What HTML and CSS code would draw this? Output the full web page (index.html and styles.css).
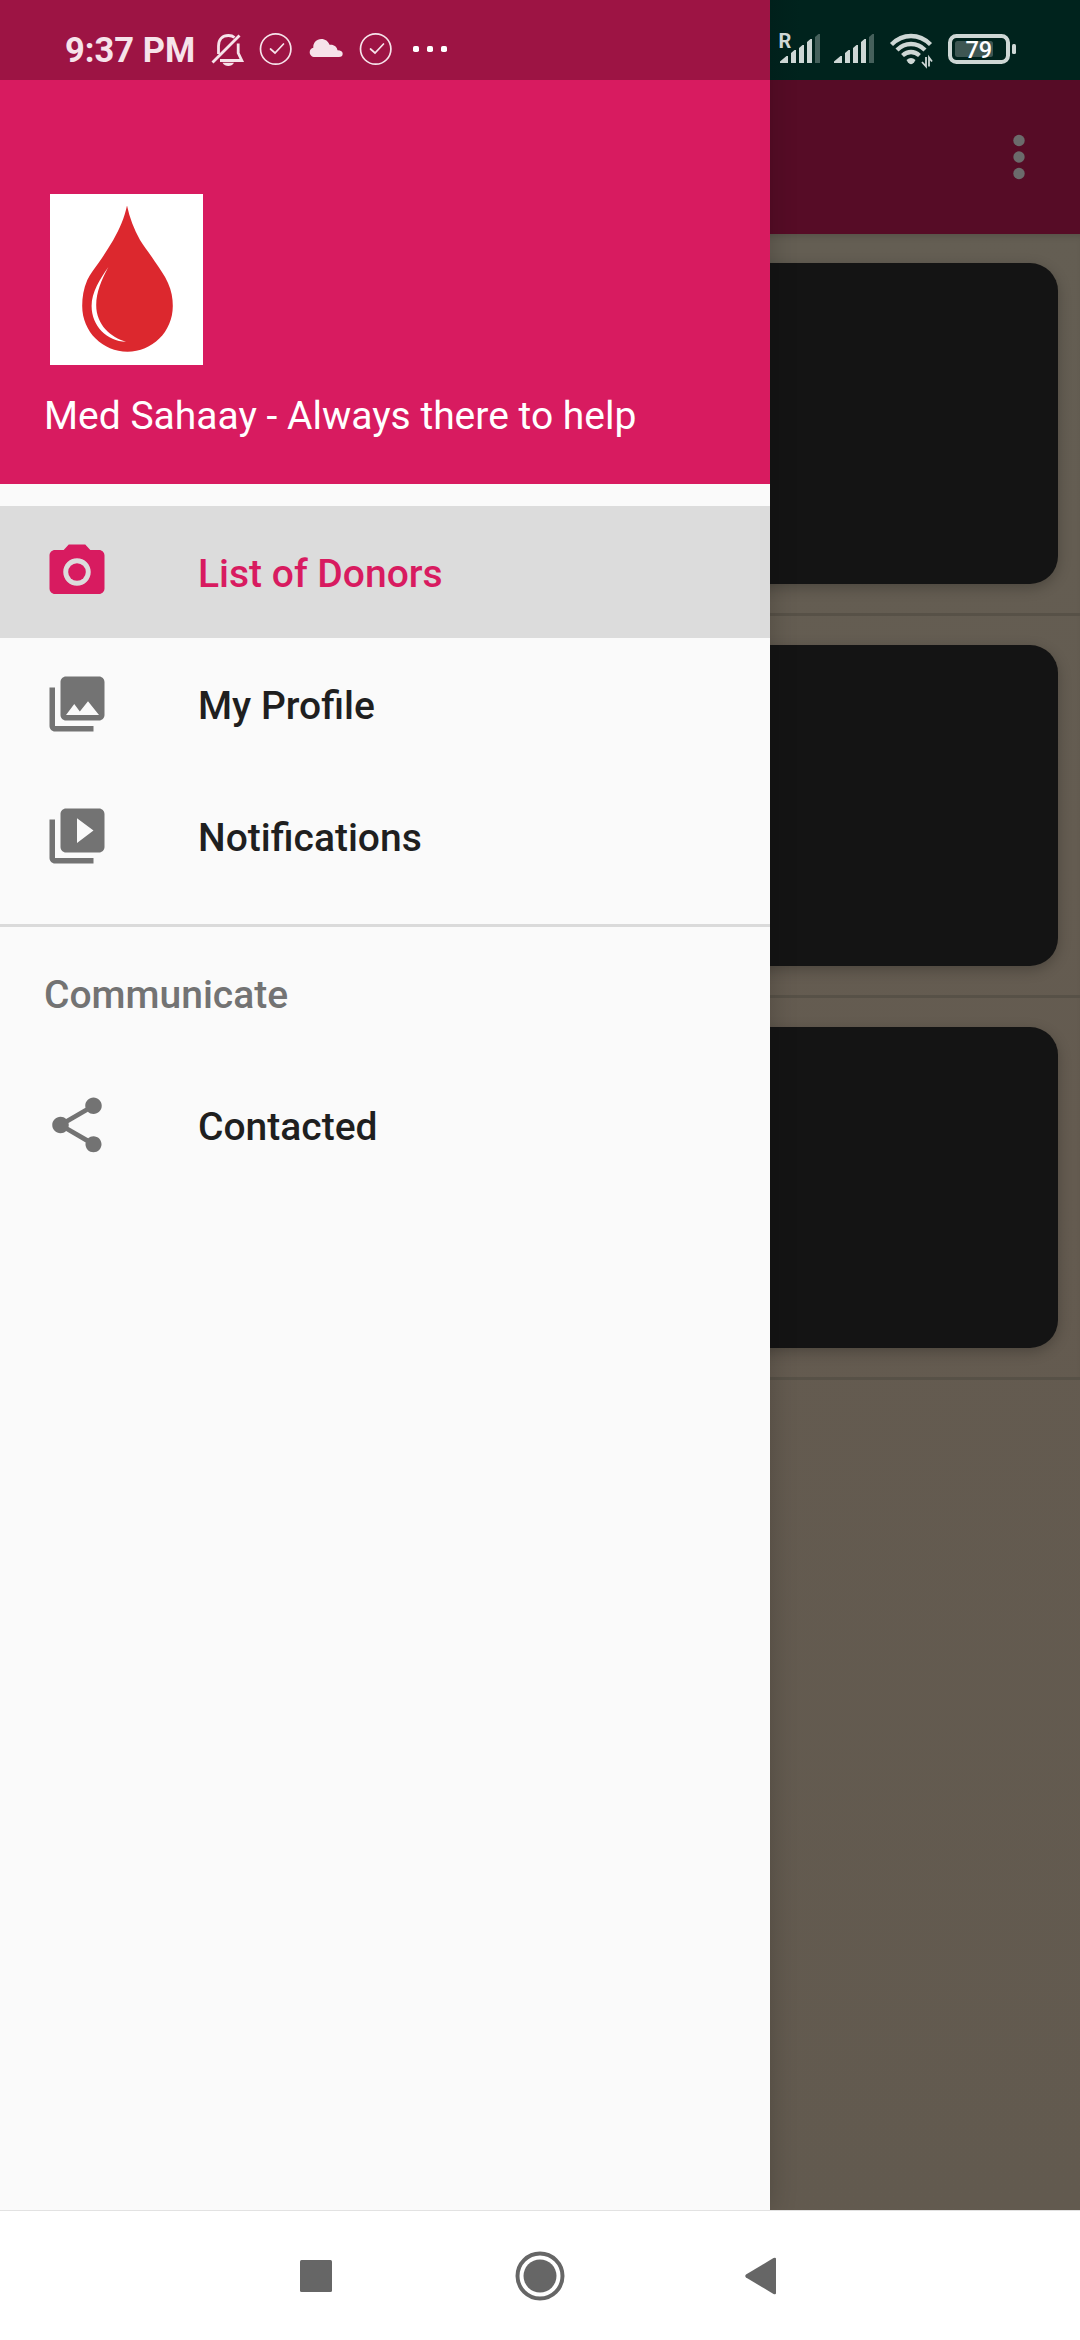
FILE: index.html
```html
<!DOCTYPE html>
<html lang="en">
<head>
<meta charset="utf-8">
<title>Med Sahaay</title>
<link rel="stylesheet" href="styles.css">
</head>
<body>
<div class="screen">
  <div class="stage">
    <main class="app">
      <div class="appbar">
        <svg class="overflow" width="12" height="46" viewBox="0 0 12 46"><circle cx="6" cy="6.500" r="5.700"/><circle cx="6" cy="23" r="5.700"/><circle cx="6" cy="39.500" r="5.700"/></svg>
      </div>
      <div class="list">
        <div class="row"><div class="card"></div></div>
        <div class="row"><div class="card"></div></div>
        <div class="row"><div class="card"></div></div>
      </div>
    </main>

    <aside class="drawer">
      <header class="drawer-header">
        <svg class="logo" width="153" height="171" viewBox="0 0 153 171">
          <path fill="#dc282e" d="M77 11.500C79.500 24 84 35 90 46C95 54 100 60 105 67.700C110 75 114.500 81 118 89C121.500 97 122.800 104 122.800 112C122.800 138 102 157.700 77.500 157.700C53 157.700 32.200 138 32.200 112C32.200 103 33.500 95 37.300 86C40.500 80 44 75 48.300 69.300C53.500 62 58.500 54 63.300 46C69.500 35 74.500 24 77 11.500Z"/>
          <path fill="#fff" d="M58.400 73C50 85 41.600 98 41.600 112C41.600 132 57 147.500 76 147.700C61 143.500 46.200 131 46.200 111C46.200 98 51.500 86 58.400 73Z"/>
        </svg>
        <p class="tagline">Med Sahaay - Always there to help</p>
      </header>
      <nav class="menu">
        <a class="item active"><svg class="icon" viewBox="0 0 24 24"><circle cx="12" cy="12" r="3.200"/><path d="M9 2L7.170 4H4c-1.100 0-2 .9-2 2v12c0 1.100.9 2 2 2h16c1.100 0 2-.9 2-2V6c0-1.100-.9-2-2-2h-3.170L15 2H9zm3 15c-2.760 0-5-2.240-5-5s2.240-5 5-5 5 2.240 5 5-2.240 5-5 5z"/></svg><span>List of Donors</span></a>
        <a class="item"><svg class="icon" viewBox="0 0 24 24"><path d="M22 16V4c0-1.100-.9-2-2-2H8c-1.100 0-2 .9-2 2v12c0 1.100.9 2 2 2h12c1.100 0 2-.9 2-2zm-11-4l2.030 2.710L16 11l4 5H8l3-4zM2 6v14c0 1.100.9 2 2 2h14v-2H4V6H2z"/></svg><span>My Profile</span></a>
        <a class="item"><svg class="icon" viewBox="0 0 24 24"><path d="M4 6H2v14c0 1.100.9 2 2 2h14v-2H4V6zm16-4H8c-1.100 0-2 .9-2 2v12c0 1.100.9 2 2 2h12c1.100 0 2-.9 2-2V4c0-1.100-.9-2-2-2zm-8 12.500v-9l6 4.500-6 4.500z"/></svg><span>Notifications</span></a>
        <hr class="divider">
        <h2 class="subheader">Communicate</h2>
        <a class="item"><svg class="icon" viewBox="0 0 24 24"><path d="M18 16.080c-.76 0-1.440.3-1.960.77L8.910 12.700c.05-.23.090-.46.090-.7s-.04-.47-.09-.7l7.050-4.110c.54.5 1.250.81 2.040.81 1.660 0 3-1.340 3-3s-1.340-3-3-3-3 1.340-3 3c0 .24.040.47.090.7L8.040 9.810C7.500 9.310 6.790 9 6 9c-1.660 0-3 1.340-3 3s1.340 3 3 3c.79 0 1.500-.31 2.040-.81l7.120 4.160c-.05.21-.08.43-.08.650 0 1.610 1.310 2.920 2.920 2.920s2.920-1.310 2.920-2.920-1.310-2.920-2.920-2.920z"/></svg><span>Contacted</span></a>
      </nav>
    </aside>

    <div class="statusbar">
      <div class="status-left">
        <span class="clock">9:37 PM</span>
        <svg width="250" height="40" viewBox="205 29 250 40">
          <g fill="none" stroke="#f6e3ea" stroke-width="2.800">
            <path d="M218.500 54V46C218.500 39 222.500 35.500 228.500 35.500C231 35.500 233 36.200 234.500 37.500M238.200 43.500V53L241.800 60.500H220"/>
            <path d="M212.500 62.500L239.500 35.500"/>
          </g>
          <path fill="#f6e3ea" d="M222.500 62.800H234Q232 66 228.300 66T222.500 62.800Z"/>
          <g fill="none" stroke="#f6e3ea" stroke-width="1.700" stroke-linecap="round">
            <circle cx="275.700" cy="49" r="15.200"/><path d="M270.500 49L275 53L283.500 44"/>
            <circle cx="375.700" cy="49" r="15.200"/><path d="M370.500 49L375 53L383.500 44"/>
          </g>
          <path fill="#f6e3ea" d="M315 57C311.500 57 309.700 54.700 309.700 52.200C309.700 49.800 311.300 48.200 313.300 47.700C313 42.500 316.500 39 321.300 39C325.300 39 328.300 41.300 329.500 44.800C334 44.300 337 46.800 337.500 50.300C341 50.300 342.700 51.800 342.700 53.700C342.700 55.800 341.300 57 339 57Z"/>
          <g fill="#fff"><rect x="413" y="46" width="6" height="6" rx="1.800"/><rect x="427" y="46" width="6" height="6" rx="1.800"/><rect x="441" y="46" width="6" height="6" rx="1.800"/></g>
        </svg>
      </div>
      <svg class="status-right" width="245" height="40" viewBox="775 29 245 40">
        <text class="roaming" x="778.500" y="47.500">R</text>
        <g id="signal" fill="#ced7d5">
          <path d="M780 63V61.500L786.500 56H788V63ZM791 63V53L794.500 50H796V63ZM799 63V48L802.500 45H804V63ZM807 63V42L810.500 39H812V63Z"/>
          <path fill="#45605b" d="M815 63V37L818.500 34H820V63Z"/>
        </g>
        <use href="#signal" x="54"/>
        <g fill="none" stroke="#ced7d5" stroke-width="4.300">
          <path d="M891.500 44.500Q900 36 911 36T930.500 44.500"/>
          <path d="M897 50Q903 44 911 44T925 50"/>
          <path d="M902.500 55.500Q906.500 52 911 52T919.500 55.500"/>
        </g>
        <path fill="#ced7d5" d="M906.500 60Q911 56 915.500 60L914 62.500Q911 66 908 62.500Z"/>
        <path fill="none" stroke="#ced7d5" stroke-width="1.800" d="M926 57V66.500L922 62M929 66.500V57.500L932 61.500"/>
        <rect x="950" y="36" width="58" height="26" rx="6.500" fill="none" stroke="#ced7d5" stroke-width="4"/>
        <rect x="955" y="41" width="38" height="16" rx="2.500" fill="#3e5652"/>
        <rect x="1012" y="44" width="4" height="10" rx="1.500" fill="#ced7d5"/>
        <text class="level" x="965.500" y="58">79</text>
      </svg>
    </div>
  </div>

  <footer class="navbar">
    <svg width="32" height="34" viewBox="0 0 32 34"><rect y="1" width="32" height="32" rx="1.500"/></svg>
    <svg class="home" width="50" height="50" viewBox="0 0 50 50"><circle cx="25" cy="25" r="22.500" fill="none" stroke="#666" stroke-width="4"/><circle cx="25" cy="25" r="16.500"/></svg>
    <svg width="31" height="38" viewBox="0 0 31 38"><path d="M1 20.500Q-.5 19 1 17.500L28.500 1Q31 0 31 2V36Q31 38 28.500 37Z"/></svg>
  </footer>
</div>
</body>
</html>
```
FILE: styles.css
```css
* { box-sizing: border-box; }

body {
  margin: 0;
  font-family: Roboto, "Liberation Sans", sans-serif;
}

svg { display: block; }

.screen {
  width: 1080px;
  height: 2340px;
  display: flex;
  flex-direction: column;
  overflow: hidden;
}

.stage {
  position: relative;
  flex: 1;
  display: grid;
  grid-template-columns: 770px 310px;
  overflow: hidden;
}

.app {
  grid-area: 1 / 1 / 2 / 3;
  padding-top: 80px;
  background: linear-gradient(175deg, #645f54 0, #645b50 55%, #625a4f 100%);
}

.appbar {
  height: 154px;
  padding-right: 55px;
  display: flex;
  align-items: center;
  justify-content: flex-end;
  background: #560c26;
}

.overflow { fill: #6b6b6b; }

.list { box-shadow: inset 0 6px 7px -4px rgba(0, 0, 0, .15); }

.row {
  padding: 29px 22px;
  border-bottom: 3px solid #575147;
}

.card {
  height: 321px;
  border-radius: 28px;
  background: #141414;
  box-shadow: 0 4px 14px rgba(0, 0, 0, .24);
}

.drawer {
  grid-area: 1 / 1 / 2 / 2;
  z-index: 1;
  background: #fafafa;
  box-shadow: 0 0 26px rgba(0, 0, 0, .2);
}

.drawer-header {
  height: 484px;
  padding: 194px 44px 0;
  background: #d81b60;
}

.logo {
  margin-left: 6px;
  background: #fff;
}

.tagline {
  margin: 29px 0 0;
  color: #fff;
  font-size: 39px;
  line-height: 45px;
  white-space: nowrap;
}

.menu { padding-top: 22px; }

.item {
  height: 132px;
  padding-left: 44px;
  display: flex;
  align-items: center;
  gap: 88px;
  color: #1f1f1f;
  font-size: 39px;
  font-weight: 500;
}

.item span { padding-top: 4px; }

.icon {
  width: 66px;
  height: 66px;
  fill: #737373;
}

.active {
  background: #dcdcdc;
  color: #d81b60;
}

.active .icon { fill: #d81b60; }

.divider {
  height: 3px;
  margin: 22px 0 0;
  border: 0;
  background: #dadada;
}

.subheader {
  height: 132px;
  margin: 0;
  padding-left: 44px;
  color: #737373;
  font-size: 39px;
  font-weight: 500;
  line-height: 136px;
}

.statusbar {
  position: absolute;
  z-index: 2;
  top: 0;
  left: 0;
  width: 1080px;
  height: 80px;
  padding: 18px 60px 0 65px;
  display: flex;
  justify-content: space-between;
  align-items: center;
  background: linear-gradient(90deg, #9d1444 770px, #00201b 770px, #00231d 800px);
}

.status-left {
  display: flex;
  align-items: center;
  gap: 10px;
}

.clock {
  width: 130px;
  padding-top: 2px;
  color: #f6e3ea;
  font-size: 34.500px;
  font-weight: 700;
  line-height: 40px;
  white-space: nowrap;
}

.roaming {
  fill: #ced7d5;
  font-size: 20px;
  font-weight: 700;
}

.level {
  fill: #fff;
  font-size: 23.500px;
  font-weight: 500;
}

.navbar {
  height: 130px;
  padding: 0 304px 0 300px;
  border-top: 1px solid #e2e2e2;
  display: flex;
  align-items: center;
  justify-content: space-between;
  background: #fff;
  fill: #666;
}

.home { margin-left: 2px; }
```
